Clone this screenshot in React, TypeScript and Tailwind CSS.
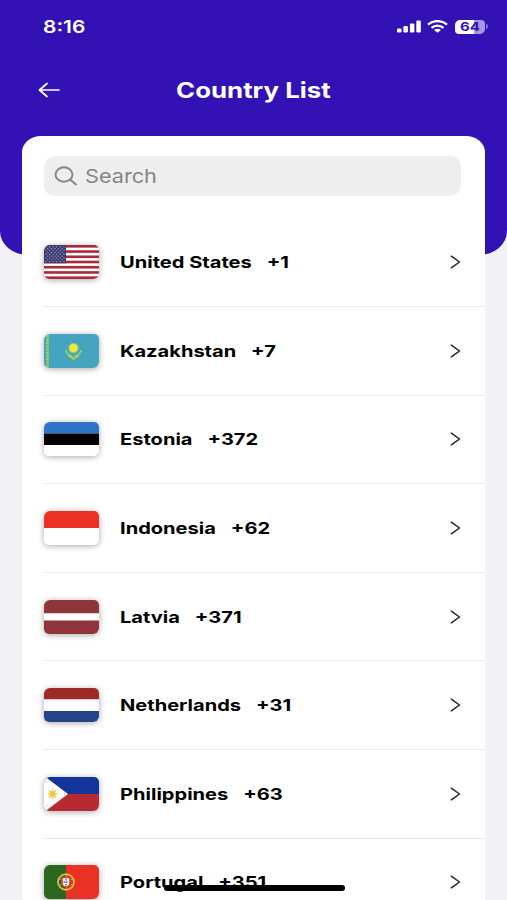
import type { ReactNode } from 'react';

type Country = {
  name: string;
  code: string;
  flag: ReactNode;
};

const Bands = ({ colors, heights }: { colors: string[]; heights: number[] }) => {
  let y = 0;
  return (
    <>
      {colors.map((color, i) => {
        const top = y;
        y += heights[i];
        return <rect key={i} x="0" y={top} width="55" height={heights[i]} fill={color} />;
      })}
    </>
  );
};

const UsFlag = () => (
  <>
    <rect width="55" height="34" fill="#fff" />
    {[0, 1, 2, 3, 4, 5, 6].map(i => (
      <rect key={i} y={i * 5.23} width="55" height="2.62" fill="#a92b3b" />
    ))}
    <rect width="22" height="18.3" fill="#3d3c72" />
    {[0, 1, 2, 3, 4, 5, 6, 7, 8].map(row =>
      (row % 2 ? [0, 1, 2, 3, 4] : [0, 1, 2, 3, 4, 5]).map(col => (
        <circle
          key={`${row}-${col}`}
          cx={(row % 2 ? 3.8 : 2) + col * 3.6}
          cy={1.8 + row * 1.85}
          r="0.6"
          fill="#b4b3cf"
        />
      ))
    )}
  </>
);

const KazakhstanFlag = () => (
  <>
    <rect width="55" height="34" fill="#45a5bf" />
    <path d="M3.5 1v32" stroke="#a5cf55" strokeWidth="2.6" strokeDasharray="2.6 0.7" />
    <circle cx="29.5" cy="14" r="5.2" fill="#9ac96d" />
    <circle cx="29.5" cy="14" r="4" fill="#f3e63d" />
    <path
      d="M22 16c.4 4 3 5.3 5.5 6l2 3.4 2-3.4c2.5-.7 5.1-2 5.5-6M24.5 21.5c1.5 2 3 2.7 5 2.9 2-.2 3.5-.9 5-2.9"
      fill="none"
      stroke="#a6d05c"
      strokeWidth="1.5"
    />
  </>
);

const PhilippinesFlag = () => (
  <>
    <Bands colors={['#14349c', '#b72a31']} heights={[17, 17]} />
    <path d="M0 0h1.5L24 17 1.5 34H0z" fill="#fff" />
    <path
      d="M8.5 11.5v11M3.5 17h10M5 13.2l7 7.6M12 13.2l-7 7.6"
      stroke="#f3cf6a"
      strokeWidth="1.5"
    />
    <circle cx="8.5" cy="17" r="2.9" fill="#f2c64d" />
    <circle cx="2.6" cy="5" r="0.9" fill="#f6dc93" />
    <circle cx="2.6" cy="29" r="0.9" fill="#f6dc93" />
    <circle cx="20.5" cy="17" r="0.9" fill="#f6dc93" />
  </>
);

const PortugalFlag = () => (
  <>
    <rect width="22" height="34" fill="#2c6620" />
    <rect x="22" width="33" height="34" fill="#e93223" />
    <ellipse cx="22" cy="17" rx="8" ry="7.8" fill="none" stroke="#d9c845" strokeWidth="1.7" />
    <path d="M15 13.5l14 7M15 20.5l14-7M22 9v16" stroke="#cfc04a" strokeWidth="0.9" />
    <path d="M17.2 12h9.6v6.5c0 5.5-9.6 5.5-9.6 0z" fill="#dc3c2d" />
    <path d="M18.8 13.3h6.4v5.2c0 3.7-6.4 3.7-6.4 0z" fill="#f3f1f3" />
    <path d="M22 14v6.5M19.5 17h5" stroke="#5b74ad" strokeWidth="1.5" strokeDasharray="1.5 1" />
  </>
);

const countries: Country[] = [
  { name: 'United States', code: '+1', flag: <UsFlag /> },
  { name: 'Kazakhstan', code: '+7', flag: <KazakhstanFlag /> },
  { name: 'Estonia', code: '+372', flag: <Bands colors={['#2f72c9', '#000', '#fff']} heights={[11.5, 11.5, 11]} /> },
  { name: 'Indonesia', code: '+62', flag: <Bands colors={['#e93223', '#fff']} heights={[17, 17]} /> },
  { name: 'Latvia', code: '+371', flag: <Bands colors={['#8f343b', '#fff', '#8f343b']} heights={[13.5, 7, 13.5]} /> },
  { name: 'Netherlands', code: '+31', flag: <Bands colors={['#9f2929', '#fff', '#25438a']} heights={[11.5, 11.5, 11]} /> },
  { name: 'Philippines', code: '+63', flag: <PhilippinesFlag /> },
  { name: 'Portugal', code: '+351', flag: <PortugalFlag /> },
];

const StatusBar = () => (
  <div className="flex h-[53px] items-center justify-between pl-[43px] pr-[19px] text-white">
    <span className="origin-left scale-x-[1.23] text-[17px] leading-5 font-semibold">8:16</span>
    <div className="flex items-center">
      <svg width="24" height="13" viewBox="0 0 24 13" fill="currentColor">
        <rect x="0" y="8.5" width="4.5" height="4" rx="1.2" />
        <rect x="6.4" y="6" width="4.5" height="6.5" rx="1.2" />
        <rect x="12.9" y="3.5" width="4.5" height="9" rx="1.2" />
        <rect x="19.3" y="0.5" width="4.5" height="12" rx="1.2" />
      </svg>
      <svg className="ml-[6px]" width="21" height="13" viewBox="0 0 21 13" fill="none" stroke="currentColor" strokeWidth="2.4">
        <path d="M1 4.7C6.4-.1 14.6-.1 20 4.7M4.5 7.9c3.5-3 8.5-3 12 0" />
        <path d="M7 10c2-1.7 5-1.7 7 0l-3.5 2.8z" fill="currentColor" stroke="none" />
      </svg>
      <div className="ml-[7px] flex h-[14px] w-[30px] items-center justify-center rounded-[5px_4px] bg-[linear-gradient(90deg,#fff_64%,#a698e2_64%)] text-[#3211b5]">
        <span className="scale-x-[1.25] text-[12px] leading-[14px] font-bold">64</span>
      </div>
      <div className="ml-px h-[5px] w-[2px] rounded-r-full bg-[#8370d5]" />
    </div>
  </div>
);

const CountryRow = ({ name, code, flag }: Country) => (
  <li className="flex h-[88.62px] items-center border-b border-[#e8e8ea] pr-[24px]">
    <div className="h-[34px] w-[55px] overflow-hidden rounded-[6px_5px] shadow-[0_1px_6px_rgba(0,0,0,0.35)]">
      <svg width="55" height="34" viewBox="0 0 55 34">{flag}</svg>
    </div>
    <div className="ml-[21px] flex origin-left scale-x-[1.24] gap-[12px] text-[16.2px] leading-6 font-[650] whitespace-nowrap">
      <span>{name}</span>
      <span>{code}</span>
    </div>
    <svg className="ml-auto" width="12" height="14" viewBox="0 0 12 14" fill="none" stroke="#222" strokeWidth="1.5">
      <path d="M2.3 1.2l8.2 5.8-8.2 5.8" strokeLinecap="round" strokeLinejoin="round" />
    </svg>
  </li>
);

export default function App() {
  return (
    <div className="relative h-[900px] w-[507px] overflow-hidden bg-[#f2f1f6] font-['Inter',sans-serif] text-black">
      {/* Header */}
      <header className="h-[255px] rounded-b-[28px_24px] bg-[#3211b5]">
        <StatusBar />
        <div className="grid h-[73px] grid-cols-[1fr_auto_1fr] items-center px-[38px] text-white">
          <svg width="22" height="16" viewBox="0 0 22 16" fill="none" stroke="currentColor" strokeWidth="1.7">
            <path d="M9 1.5L1.5 8 9 14.5M1.5 8H21" strokeLinecap="round" strokeLinejoin="round" />
          </svg>
          <h1 className="scale-x-[1.2] text-[21.5px] leading-7 font-bold">Country List</h1>
        </div>
      </header>

      {/* Card */}
      <main className="relative mr-[22px] ml-[22.4px] -mt-[119px] h-[764px] overflow-hidden rounded-t-[19px_16px] bg-white pl-[21.6px]">
        <div className="mt-[20px] mr-[24px] flex h-[40px] items-center rounded-[12px_10px] bg-[#eee] pl-[10px] text-[#858589]">
          <svg width="24" height="20" viewBox="0 0 24 20" fill="none" stroke="currentColor" strokeWidth="1.9">
            <ellipse cx="10" cy="8.5" rx="8.5" ry="7.2" />
            <path d="M16.3 13.7l5.7 4.8" strokeLinecap="round" />
          </svg>
          <span className="ml-[7px] origin-left scale-x-[1.14] pt-0.5 text-[19px] leading-6">Search</span>
        </div>
        <ul className="mt-[22.4px]">
          {countries.map(country => (
            <CountryRow key={country.name} {...country} />
          ))}
        </ul>
      </main>

      {/* Home indicator */}
      <div className="absolute bottom-[9px] left-[164px] h-[6px] w-[181px] rounded-full bg-black" />
    </div>
  );
}
